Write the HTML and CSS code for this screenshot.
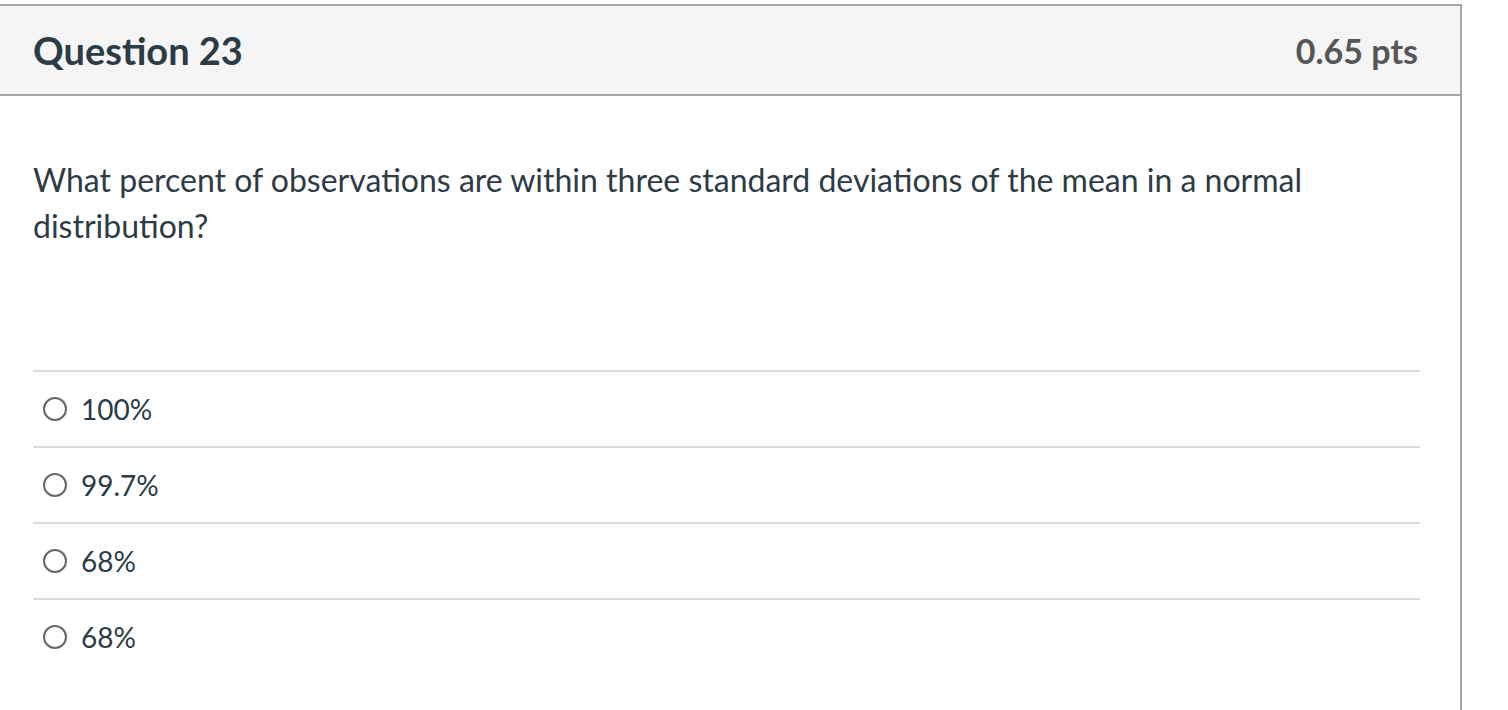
FILE: index.html
```html
<!DOCTYPE html>
<html lang="en">
<head>
<meta charset="utf-8">
<title>Question 23</title>
<link rel="stylesheet" href="styles.css">
</head>
<body>
<div class="question">
  <div class="header">
    <h2 class="title">Question 23</h2>
    <div class="points">0.65 pts</div>
  </div>
  <div class="content">
    <p class="text">What percent of observations are within three standard deviations of the mean in a normal distribution?</p>
    <div class="answers">
      <label class="answer"><span class="radio"></span><span class="label">100%</span></label>
      <label class="answer"><span class="radio"></span><span class="label">99.7%</span></label>
      <label class="answer"><span class="radio"></span><span class="label">68%</span></label>
      <label class="answer"><span class="radio"></span><span class="label">68%</span></label>
    </div>
  </div>
</div>
</body>
</html>
```
FILE: styles.css
```css
html, body {
  margin: 0;
  padding: 0;
  background: #fff;
}
body {
  font-family: Lato, "Open Sans", sans-serif;
  color: #2d3b45;
  overflow: hidden;
  height: 710px;
}
.question {
  margin-top: 4px;
  margin-left: -2px;
  width: 1460px;
  height: 704px;
  border: 2px solid #a5a5a5;
  border-bottom: none;
}
.header {
  display: flex;
  align-items: center;
  justify-content: space-between;
  height: 88px;
  background: #f5f5f5;
  border-bottom: 2px solid #a5a5a5;
  padding: 0 42px 0 33px;
}
.title {
  margin: 0;
  font-size: 38px;
  font-weight: 700;
  color: #2d3b45;
}
.points {
  font-size: 34px;
  font-weight: 700;
  color: #565656;
}
.content {
  padding: 61px 40px 0 33px;
}
.text {
  margin: 0;
  font-size: 32px;
  line-height: 46px;
}
.answers {
  margin-top: 121px;
}
.answer {
  display: flex;
  align-items: center;
  gap: 14px;
  height: 74px;
  border-top: 2px solid #dddddd;
  padding-left: 10px;
}
.radio {
  width: 24px;
  height: 24px;
  border: 2px solid #666;
  border-radius: 50%;
  box-sizing: border-box;
  flex: none;
}
.label {
  font-size: 28px;
}
```
